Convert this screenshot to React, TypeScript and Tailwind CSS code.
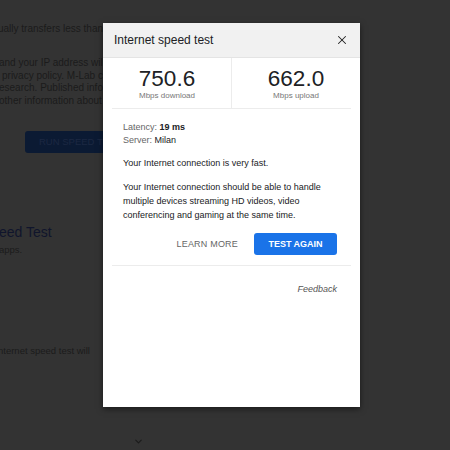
import { X, ChevronDown } from "lucide-react";

export default function App() {
  return (
    <div
      className="relative h-[450px] w-[450px] overflow-hidden bg-[#333333]"
      style={{ fontFamily: '"Liberation Sans", Arial, sans-serif' }}
    >
      {/* dimmed page behind the dialog */}
      <div className="flex flex-col text-[10px] text-[#1b1b1b]">
        <p className="-ml-[2px] mt-[22px] leading-[13px]">ually transfers less than 40 MB</p>
        <div className="mt-[22px] flex flex-col leading-[12.7px]">
          <p className="-ml-[1px]">and your IP address will be</p>
          <p className="ml-[2px]">privacy policy. M-Lab conducts</p>
          <p className="-ml-[1px]">esearch. Published information</p>
          <p className="-ml-[1px]">other information about you</p>
        </div>
        <div className="ml-[25px] mt-[23px] flex h-[22px] w-[110px] items-center rounded-[3px] bg-[#0b1a33] pl-[14px] text-[9.5px] text-[#1c2842]">
          RUN SPEED TEST
        </div>
        <p className="-ml-[1px] mt-[70px] text-[14px] leading-[18px] text-[#10152c]">eed Test</p>
        <p className="-ml-[1px] mt-[3px] text-[9.5px] leading-[12px]">apps.</p>
        <p className="-ml-[2px] mt-[89px] text-[9.5px] leading-[12px]">nternet speed test will</p>
        <div className="ml-[133px] mt-[79px] text-[#1b1b1b]">
          <ChevronDown size={11} strokeWidth={2.5} />
        </div>
      </div>

      {/* dialog */}
      <div className="absolute left-[103px] top-[23px] flex h-[384px] w-[257px] flex-col bg-white shadow-[0_2px_6px_rgba(0,0,0,0.5)]">
        <div className="flex h-[35px] items-center justify-between border-b border-[#e4e4e4] bg-[#f1f1f1] pl-[11px] pr-[11px]">
          <span className="text-[12px] text-[#202124]">Internet speed test</span>
          <X size={14} strokeWidth={1.8} className="text-[#222]" />
        </div>

        <div className="flex h-[50px]">
          <div className="flex flex-1 flex-col items-center pt-[9px] border-r border-[#ececec]">
            <span className="text-[22.5px] leading-[23px] text-[#202124]">750.6</span>
            <span className="mt-[1px] text-[8px] leading-[10px] text-[#777]">Mbps download</span>
          </div>
          <div className="flex flex-1 flex-col items-center pt-[9px]">
            <span className="text-[22.5px] leading-[23px] text-[#202124]">662.0</span>
            <span className="mt-[1px] text-[8px] leading-[10px] text-[#777]">Mbps upload</span>
          </div>
        </div>
        <div className="mx-[9px] border-b border-[#ececec]" />

        <div className="flex flex-col px-[20px] pt-[12px] text-[9px] leading-[13px] text-[#202124]">
          <p>
            <span className="text-[#666]">Latency:</span> <span className="font-semibold">19 ms</span>
          </p>
          <p>
            <span className="text-[#666]">Server:</span> Milan
          </p>
          <p className="mt-[10px]">Your Internet connection is very fast.</p>
          <p className="mt-[10px] leading-[14px]">
            Your Internet connection should be able to handle multiple devices streaming HD videos, video
            conferencing and gaming at the same time.
          </p>
          <div className="mt-[11px] flex items-center justify-end gap-[16px] pr-[3px]">
            <span className="text-[9px] tracking-[0.2px] text-[#666]">LEARN MORE</span>
            <span className="flex h-[22px] w-[83px] items-center justify-center rounded-[3px] bg-[#1a73e8] text-[9px] font-bold text-white">
              TEST AGAIN
            </span>
          </div>
        </div>

        <div className="mx-[9px] mt-[10px] border-b border-[#ececec]" />
        <div className="flex justify-end pr-[23px] pt-[17px]">
          <span className="text-[9px] italic text-[#555]">Feedback</span>
        </div>
      </div>
    </div>
  );
}
